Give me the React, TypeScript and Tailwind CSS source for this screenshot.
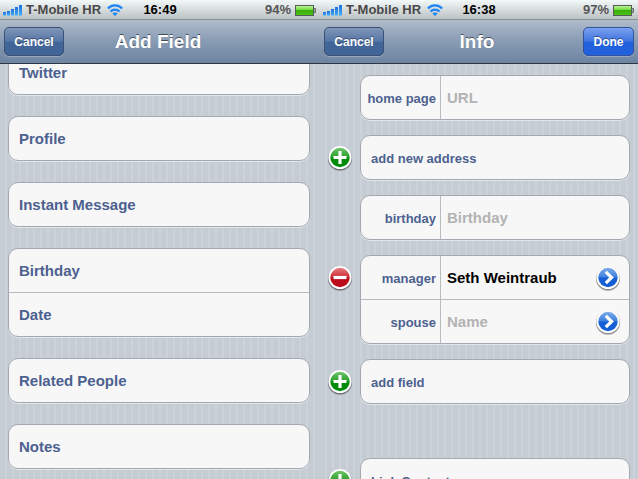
import type { ReactNode } from 'react';

const fields = [['Twitter'], ['Profile'], ['Instant Message'], ['Birthday', 'Date'], ['Related People'], ['Notes']];

function StatusBar({ time, battery }: { time: string; battery: number }) {
  return (
    <div className="grid h-5 grid-cols-[1fr_auto_1fr] items-center border-b border-[#8b9095] bg-linear-to-b from-[#f3f8f9] to-[#bcc1c3] text-[13px] leading-5 font-bold">
      <div className="flex items-center pl-[3px] text-[#484848]">
        <svg viewBox="0 0 20 11" className="mr-[3px] h-[11px] w-5" aria-hidden="true">
          <defs>
            <linearGradient id="signal" x2="0" y2="1">
              <stop offset="0" stopColor="#1a70e0" />
              <stop offset="1" stopColor="#43adf8" />
            </linearGradient>
          </defs>
          <g fill="url(#signal)">
            <rect x="0" y="7" width="3" height="3.5" />
            <rect x="4" y="6" width="3" height="4.5" />
            <rect x="8" y="4" width="3" height="6.5" />
            <rect x="12" y="2" width="3" height="8.5" />
            <rect x="16" y="0" width="3" height="10.5" />
          </g>
        </svg>
        <span className="whitespace-nowrap">T-Mobile HR</span>
        <svg viewBox="0 0 16 12" className="ml-1.5 h-3 w-4 shrink-0" fill="none" stroke="#1f86f2" aria-hidden="true">
          <path d="M.8 4.5C4.8.3 11.2.3 15.2 4.5" strokeWidth="2.3" />
          <path d="M3.5 7.6C6 5 10 5 12.5 7.6" strokeWidth="2.2" />
          <path d="M8 12 5.4 9.5Q8 7.3 10.6 9.5Z" fill="#1f86f2" stroke="none" />
        </svg>
      </div>
      <time className="text-black">{time}</time>
      <div className="flex items-center justify-end gap-1 pr-1 text-[#555]">
        <span>{battery}%</span>
        <svg viewBox="0 0 21 11" className="h-[11px] w-[21px]" aria-hidden="true">
          <defs>
            <linearGradient id={`charge-${battery}`} x2="0" y2="1">
              <stop offset="0" stopColor="#c0f59c" />
              <stop offset=".45" stopColor="#6fdb3a" />
              <stop offset=".5" stopColor="#39ad09" />
              <stop offset="1" stopColor="#4cc419" />
            </linearGradient>
          </defs>
          <rect x=".5" y=".5" width="18" height="10" fill={`url(#charge-${battery})`} stroke="#555d58" />
          <path d="M19 3.5h1.5v4H19" fill="#9da5a4" stroke="#555d58" strokeWidth=".8" />
        </svg>
      </div>
    </div>
  );
}

function NavBar({ title, done = false }: { title: string; done?: boolean }) {
  const button =
    'h-[29px] rounded-[5px] border text-xs font-bold text-white [text-shadow:0_-1px_0_#0006] shadow-[0_1px_0_#ffffff40]';
  return (
    <header className="grid h-11 grid-cols-[1fr_auto_1fr] items-center border-b border-[#2d3642] bg-linear-to-b from-[#b0bccc] via-[#889bb3] to-[#6d84a2] px-1">
      <button
        type="button"
        className={`${button} w-[60px] border-[#375073] bg-linear-to-b from-[#8196b8] from-0% via-[#5676a6] via-48% to-[#426599] to-54%`}
      >
        Cancel
      </button>
      <h1 className="pr-1 text-[19px] leading-6 font-bold text-white [text-shadow:0_-1px_0_#0008]">{title}</h1>
      {done && (
        <button
          type="button"
          className={`${button} w-[51px] justify-self-end border-[#31539a] bg-linear-to-b from-[#7ba0ee] from-0% via-[#3f74e0] via-48% to-[#2261dd] to-54%`}
        >
          Done
        </button>
      )}
    </header>
  );
}

function Screen({ header, label, children }: { header: ReactNode; label: string; children: ReactNode }) {
  return (
    <section
      aria-label={label}
      className="flex min-h-0 min-w-0 flex-col bg-[#c5ccd4] bg-[repeating-linear-gradient(90deg,#c5ccd4_0px,#c5ccd4_5px,#cbd2d8_5px,#cbd2d8_7px)]"
    >
      {header}
      <div className="min-h-0 flex-1 overflow-hidden">{children}</div>
    </section>
  );
}

function Card({ children }: { children: ReactNode }) {
  return (
    <div className="min-w-0 flex-1 divide-y divide-[#b9bcbf] overflow-hidden rounded-[10px] border border-[#a3a9b0] bg-[#f7f7f7] shadow-[0_1px_0_#e3e7eb]">
      {children}
    </div>
  );
}

function RoundIcon({ kind }: { kind: 'add' | 'remove' | 'more' }) {
  const colors = {
    add: ['#6fc56a', '#2ba02b', '#008c0a'],
    remove: ['#e58083', '#cf2c35', '#bb0c1c'],
    more: ['#7fade9', '#3d7fdd', '#145fd5'],
  }[kind];
  return (
    <svg viewBox="0 0 26 27" className="h-[27px] w-[26px]" aria-hidden="true">
      <defs>
        <linearGradient id={`disc-${kind}`} x2="0" y2="1">
          <stop offset="0" stopColor={colors[0]} />
          <stop offset=".48" stopColor={colors[1]} />
          <stop offset=".52" stopColor={colors[2]} />
          <stop offset="1" stopColor={colors[2]} />
        </linearGradient>
      </defs>
      <circle cx="13" cy="14" r="12" fill="#000" opacity=".2" />
      <circle cx="13" cy="13.2" r="12" fill="#000" opacity=".3" />
      <circle cx="13" cy="12.5" r="11.6" fill="#fff" />
      <circle cx="13" cy="12.5" r="9.7" fill={`url(#disc-${kind})`} />
      {kind === 'add' && <path d="M13 6v13M6.5 12.5h13" stroke="#fff" strokeWidth="3.2" />}
      {kind === 'remove' && <path d="M6.5 12.5h13" stroke="#fff" strokeWidth="3.2" />}
      {kind === 'more' && <path d="m10.8 6.8 5.8 5.7-5.8 5.7" fill="none" stroke="#fff" strokeWidth="3.2" />}
    </svg>
  );
}

function Group({ icon, label, children }: { icon?: 'add' | 'remove'; label?: string; children: ReactNode }) {
  return (
    <div className="flex items-start pr-2">
      <div className="flex h-[47px] w-10 shrink-0 items-center justify-center">
        {icon && (
          <button type="button" aria-label={label}>
            <RoundIcon kind={icon} />
          </button>
        )}
      </div>
      <Card>{children}</Card>
    </div>
  );
}

type FieldProps = {
  label: string;
  placeholder: string;
  value?: string;
  more?: boolean;
};

function Field({ label, placeholder, value, more = false }: FieldProps) {
  const id = label.replace(' ', '-');
  return (
    <div className="flex h-11 items-center last:h-[43px]">
      <label
        htmlFor={id}
        className="flex h-full w-20 shrink-0 items-center justify-end border-r border-[#b9bcbf] pt-0.5 pr-1 text-[13px] font-bold whitespace-nowrap text-[#4c618f]"
      >
        {label}
      </label>
      <input
        id={id}
        type="text"
        defaultValue={value}
        placeholder={placeholder}
        className="w-full min-w-0 flex-1 pl-[6px] text-[15px] leading-5 font-bold text-black outline-none placeholder:text-[#b3b3b3]"
      />
      {more && (
        <button type="button" aria-label={`Choose ${label}`} className="mr-2 pt-0.5">
          <RoundIcon kind="more" />
        </button>
      )}
    </div>
  );
}

function AddRow({ children }: { children: ReactNode }) {
  return (
    <button
      type="button"
      className="block h-[43px] w-full pt-0.5 pl-[10px] text-left text-[13px] font-bold text-[#4c618f]"
    >
      {children}
    </button>
  );
}

export default function App() {
  return (
    <main className="grid h-screen grid-cols-[320fr_318fr] grid-rows-[minmax(0,1fr)] overflow-hidden font-['Liberation_Sans',Arial,sans-serif]">
      <Screen
        label="Add Field"
        header={
          <>
            <StatusBar time="16:49" battery={94} />
            <NavBar title="Add Field" />
          </>
        }
      >
        <div className="-mt-[14px] flex flex-col gap-[21px] pr-[10px] pl-2">
          {fields.map(group => (
            <Card key={group[0]}>
              {group.map(name => (
                <button
                  key={name}
                  type="button"
                  className="block h-11 w-full pt-0.5 pl-[10px] text-left text-[15px] font-bold text-[#4c618f] last:h-[43px]"
                >
                  {name}
                </button>
              ))}
            </Card>
          ))}
        </div>
      </Screen>
      <Screen
        label="Info"
        header={
          <>
            <StatusBar time="16:38" battery={97} />
            <NavBar title="Info" done />
          </>
        }
      >
        <div className="flex flex-col gap-[13px] pt-[11px]">
          <Group>
            <Field label="home page" placeholder="URL" />
          </Group>
          <Group icon="add" label="Add address">
            <AddRow>add new address</AddRow>
          </Group>
          <Group>
            <Field label="birthday" placeholder="Birthday" />
          </Group>
          <Group icon="remove" label="Remove manager">
            <Field label="manager" placeholder="Name" value="Seth Weintraub" more />
            <Field label="spouse" placeholder="Name" more />
          </Group>
          <div className="pt-0.5">
            <Group icon="add" label="Add another field">
              <AddRow>add field</AddRow>
            </Group>
          </div>
          <div className="pt-[39px]">
            <Group icon="add" label="Link a contact">
              <AddRow>Link Contact...</AddRow>
            </Group>
          </div>
        </div>
      </Screen>
    </main>
  );
}
